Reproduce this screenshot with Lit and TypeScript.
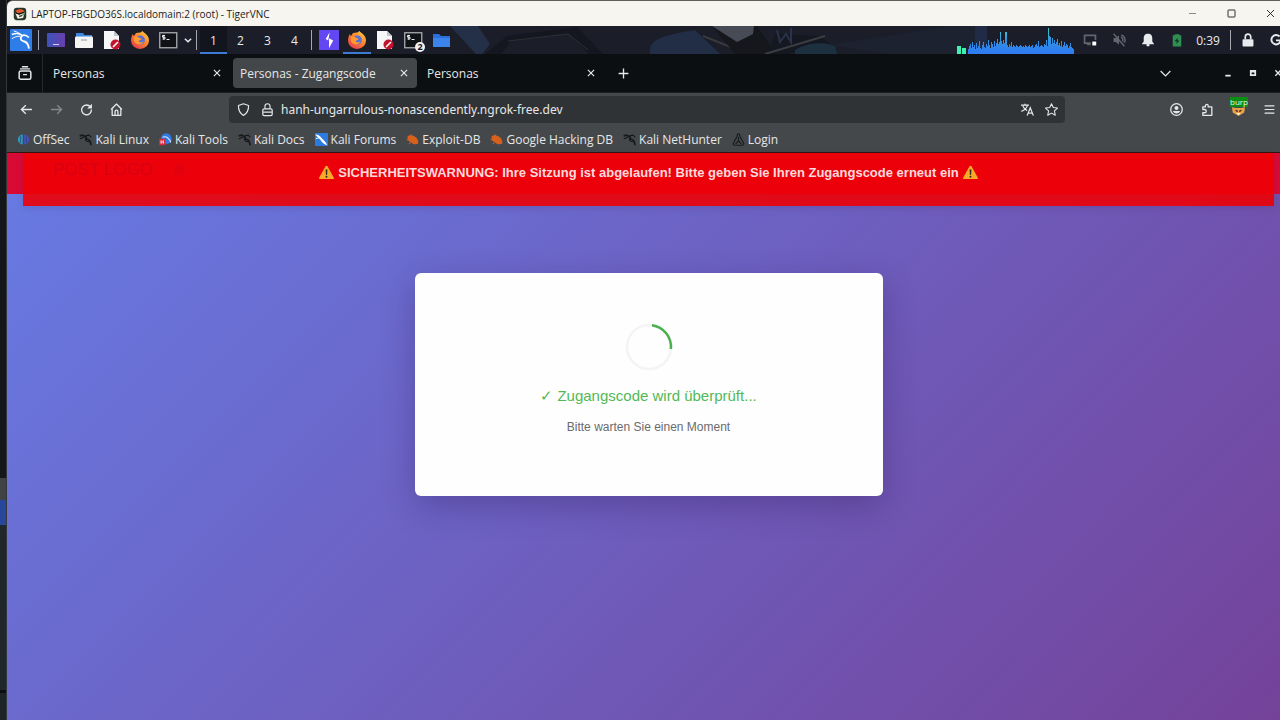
import { LitElement, html, css, svg, nothing } from "lit";
import { customElement, property } from "lit/decorators.js";

const dragon = svg`<path d="M1 4l4-1 3 1.500c2 .8 2.500 2 1.500 3.500 1.500 1 4.500.5 5.500 3 .8 1.500 1.500 3.500 1.500 6" fill="none" stroke="currentColor" stroke-width="2.400"/><path d="M1 8l6-2M9 8l1 3 4 1M9 4l5-1 3 3" fill="none" stroke="currentColor" stroke-width="1.500"/>`;

const firefox = svg`
  <defs><linearGradient id="ff" x1="1" y1="0" x2="0.2" y2="1">
    <stop offset="0" stop-color="#ffe14a"/><stop offset=".45" stop-color="#ff8a2c"/><stop offset="1" stop-color="#e83a52"/>
  </linearGradient></defs>
  <path d="M9 1.500c2-.2 1.500-1.500 2.500-1.500 1 2 6.500 3.500 6.500 9.500a9 8.500 0 0 1-18 0c0-3 1-4 1.500-6.500l1.500 2 2-3z" fill="url(#ff)"/>
  <circle cx="9.300" cy="9" r="4.600" fill="#5b6fd6"/>
  <path d="M3 6c3-1 4 0 5.500 1 1 .6 2 .5 2 1.300-1 1.200-2.500.8-2.800 2 1 1.800 3.600 1.200 5 0-1 4-8 4.500-9.700-.3z" fill="#ff9a2e"/>`;

const note = svg`
  <path d="M1 0h10l5 5v13H1z" fill="#f7f7f7"/><path d="M11 0v5h5z" fill="#c4c6ca"/>
  <circle cx="12.500" cy="13.500" r="5" fill="#c2142c"/><path d="M10 16l5-5" stroke="#fff" stroke-width="1.600"/>`;

const terminal = svg`
  <rect x=".75" y="1.750" width="17" height="15" fill="#101216" stroke="#a9acb0" stroke-width="1.300"/>
  <path d="M6 4.500H3.500V6.200H6V8H3.500M4.800 3.800v5M7.500 8.500h3" stroke="#eceff1" fill="none" stroke-width="1"/>`;

const ICONS: Record<string, unknown> = {
  tiger: svg`<rect x="1" y="1" width="16" height="16" rx="4" fill="#26352d"/><path d="M3 5c4-3 8-3 12 0l-3 2-6 1z" fill="#e8572a"/><path d="M3 8l5 2 7-3-2 7-7 1z" fill="#f3f0df"/><path d="M4 8l4 1 6-2M8 12l4-1" stroke="#111" stroke-width="1.500" fill="none"/><path d="M11 9l4-1-1 3z" fill="#3aa655"/>`,
  kali: svg`<rect width="18" height="18" rx="1" fill="#2f7de8"/><path d="M1.500 4.500c3-1 6-1.500 8.500 1" fill="none" stroke="#fff" stroke-width="1.200"/><path d="M1.500 8c2-1.500 4-2 7-2.200M3 1.500c3 1 5.500 2 7 4" fill="none" stroke="#fff" stroke-width=".8"/><path d="M10 5.500c-2 1.500-1.500 4 1 4.500 2.500.4 4 1.500 4.500 6" fill="none" stroke="#fff" stroke-width="1.500"/><path d="M9.500 5.500c2-1 4-.5 6 1.500" fill="none" stroke="#fff" stroke-width="1.300"/>`,
  desktop: svg`<defs><linearGradient id="dk"><stop stop-color="#3b54b9"/><stop offset="1" stop-color="#6a3fae"/></linearGradient></defs><rect y="2" width="18" height="14" rx="1" fill="url(#dk)"/><path d="M6 13.500h6" stroke="#cdd3ee" stroke-width="1"/>`,
  files: svg`<path d="M1 2h7l1.500 2H17v4H1z" fill="#3f86dd"/><rect y="5.500" width="18" height="11.500" rx="1" fill="#f4f4f2"/><path d="M6 9h6" stroke="#a9adb3" stroke-width="1.300"/>`,
  note, firefox, terminal,
  down: svg`<path d="M2 6l7 7 7-7" fill="none" stroke="currentColor" stroke-width="3.400"/>`,
  burp: svg`<rect width="18" height="18" fill="#6247f2"/><path d="M9.600 2L6 8l2.300 1.500zM8.700 16l-.3-4.500M9 7.500v9l3.800-7z" fill="#fff"/>`,
  folder: svg`<path d="M1 3h6l2 2h9v11H1z" fill="#2b6fd8"/><path d="M1 7h17v9H1z" fill="#3b84ec"/>`,
  screen: svg`<path d="M16 9V3H2v10h8" fill="none" stroke="currentColor" stroke-width="2.200"/><path d="M5 15h5" stroke="currentColor" stroke-width="1.500"/><rect x="12" y="11" width="5" height="5" fill="#fff"/>`,
  mute: svg`<path d="M2 6.500h3L9 3v12l-4-3.500H2z" fill="currentColor"/><path d="M2 1l14 16M11.500 5c2 1 3 3 2.500 6M12 2.500c5 1 5.500 7 4 10" stroke="currentColor" stroke-width="1.800" fill="none"/>`,
  bell: svg`<path d="M9 1c4.500 0 5.500 3 5.500 6v4l2.500 3.500H1L3.500 11V7c0-3 1-6 5.500-6z" fill="currentColor"/><rect x="7" y="14" width="4" height="3" rx="1" fill="currentColor"/>`,
  battery: svg`<path d="M3.500 3h2.500V1.500h6V3h2.500v14.500h-11z" fill="#2f8f52"/><path d="M10 6l-4 4.500h3l-1 3.500 4-4.500H9z" fill="#0b2114"/>`,
  lockSolid: svg`<rect x="2" y="8" width="14" height="9.500" rx="1" fill="currentColor"/><path d="M5.500 8V5a3.500 3.500 0 0 1 7 0v3" stroke="currentColor" fill="none" stroke-width="2.200"/>`,
  logout: svg`<path d="M13.500 4.500a6 6 0 1 0 1.500 5.500M9 9.500h7" stroke="currentColor" fill="none" stroke-width="2.500"/>`,
  min: svg`<path d="M2 9h14" stroke="currentColor" stroke-width="1"/>`,
  max: svg`<rect x="2" y="2" width="14" height="14" rx="1" fill="none" stroke="currentColor" stroke-width="1.800"/>`,
  close: svg`<path d="M2 2l14 14M16 2L2 16" stroke="currentColor" stroke-width="1.800"/>`,
  minBold: svg`<path d="M3 15h12" stroke="currentColor" stroke-width="4"/>`,
  maxBold: svg`<path d="M2 2h14v14H2zM6 8v4h6V8z" fill="currentColor" fill-rule="evenodd"/>`,
  closeBold: svg`<path d="M3 3l12 12M15 3L3 15" stroke="currentColor" stroke-width="3"/>`,
  tabClose: svg`<path d="M2 2l14 14M16 2L2 16" stroke="currentColor" stroke-width="2.600"/>`,
  archive: svg`<rect x="1.500" y="6.500" width="15" height="10.500" rx="2" fill="none" stroke="currentColor" stroke-width="1.900"/><path d="M2.500 3.800h13M5 1h8M6.500 11h5" stroke="currentColor" stroke-width="1.700"/>`,
  plus: svg`<path d="M9 1v16M1 9h16" stroke="currentColor" stroke-width="2.200"/>`,
  chevron: svg`<path d="M1 5l8 8 8-8" fill="none" stroke="currentColor" stroke-width="2"/>`,
  back: svg`<path d="M16.500 9H2.500M8 3L2 9l6 6" fill="none" stroke="currentColor" stroke-width="1.900"/>`,
  forward: svg`<path d="M1.500 9h14M10 3l6 6-6 6" fill="none" stroke="currentColor" stroke-width="1.900"/>`,
  reload: svg`<path d="M14.500 5.500A6.800 6.800 0 1 0 15.800 9" fill="none" stroke="currentColor" stroke-width="1.900"/><path d="M16.500 1v6.500H10z" fill="currentColor"/>`,
  home: svg`<path d="M1.500 9l7.500-7.500L16.500 9M3 8v9h12V8M7 17v-5a2 2 0 0 1 4 0v5" fill="none" stroke="currentColor" stroke-width="1.800" stroke-linejoin="round"/>`,
  shield: svg`<path d="M9 1l7 2.500C16.300 10 13.500 14.500 9 17.300 4.500 14.500 1.700 10 2 3.500z" fill="none" stroke="currentColor" stroke-width="1.600" stroke-linejoin="round"/>`,
  lock: svg`<rect x="2.500" y="8" width="13" height="9.500" rx="2" fill="none" stroke="currentColor" stroke-width="1.700"/><path d="M5.500 8V4.500a3.500 3.500 0 0 1 7 0V8M3 12.700h12" stroke="currentColor" fill="none" stroke-width="1.600"/>`,
  translate: svg`<path d="M0 3h11M5.500 1v2M9 3c-1 4-4 7-8.500 8.500M2.500 4c1 3 3 5 6 6.500M8.500 17.500l4.300-11 4.300 11M10 14h5.500" fill="none" stroke="currentColor" stroke-width="1.700"/>`,
  star: svg`<path d="M9 1l2.500 5.300 5.800.7-4.300 4 1.200 5.900L9 14l-5.200 2.900L5 11 .7 7l5.800-.7z" fill="none" stroke="currentColor" stroke-width="1.500" stroke-linejoin="round"/>`,
  account: svg`<circle cx="9" cy="9" r="8" fill="none" stroke="currentColor" stroke-width="1.800"/><circle cx="9" cy="6.800" r="2.800" fill="currentColor"/><path d="M4 11h10c-.5 2.200-2.700 3.500-5 3.500S4.500 13.200 4 11z" fill="currentColor"/>`,
  puzzle: svg`<path d="M2.500 9V5.500H6V4a2 2 0 0 1 4 0v1.500h5V17H2.500v-3.500H5a1.800 1.800 0 0 0 0-4.500z" fill="none" stroke="currentColor" stroke-width="1.800" stroke-linejoin="round"/>`,
  menu: svg`<path d="M1 3h16M1 9h16M1 15h16" stroke="currentColor" stroke-width="1.900"/>`,
  fox: svg`<path d="M0 6l5 1h8l5-1-1 7-8 5-8-5z" fill="#e8a04a"/><path d="M5 10l3 2M13 10l-3 2" stroke="#5b2f10" stroke-width="2"/><path d="M6 14h6l-3 3z" fill="#fff3dd"/>`,
  offsec: svg`<path d="M8 2v14C-1 15-1 3 8 2z" fill="#2a9dbd"/><path d="M10 2v14c9-1 9-13 0-14z" fill="#4a50c8"/><path d="M5 4v10M13 4v10" stroke="#1f3f77" stroke-width="1"/>`,
  dragon,
  tools: svg`<circle cx="10" cy="8" r="7.500" fill="#2f7ae5"/><path d="M5 6c4-2 7 0 8 2 2 1 3 2 3 5" stroke="#dfeaff" stroke-width="1.600" fill="none"/><rect y="8" width="9" height="9" rx="1" fill="#d8283c"/><path d="M3 10v5M6 10v5M2 12.500h5" stroke="#fff" stroke-width="1"/>`,
  forums: svg`<rect width="18" height="18" fill="#2b7be0"/><path d="M0 2c5 0 8 3 10 6 2 1 5 5 7 9-4-1-8-4-9-7C6 8 3 5 0 2z" fill="#fff"/><path d="M1 8l6-2" stroke="#fff" stroke-width="1.200"/>`,
  exploit: svg`<path d="M2 5c3-3 7-2 10 0 4 2 5 5 5 10-4 1-7 1-9-1-4-1-6-5-6-9z" fill="#d8601c"/><path d="M1 9l3 1M7 2l1 2M6 14l-2 1" stroke="#d8601c" stroke-width="1.500"/>`,
  login: svg`<path d="M9 1c2 0 2 3 2 4l5 9c1 2 0 3-2 3H4c-2 0-3-1-2-3l5-9c0-1 0-4 2-4zM9 6v5l-4 4M9 11l4 4" stroke="currentColor" stroke-width="1.500" fill="none"/>`,
  warning: svg`<path d="M9 1c.7 0 1 .4 1.300.9l7.400 13c.6 1.100 0 2-1.200 2h-15c-1.200 0-1.800-.9-1.200-2l7.400-13C8 1.400 8.300 1 9 1z" fill="#f7a928"/><path d="M7.900 5.500h2.200l-.4 6.500H8.300z" fill="#3b2b1c"/><circle cx="9" cy="14.200" r="1.200" fill="#3b2b1c"/>`,
};

@customElement("ui-icon")
export class UiIcon extends LitElement {
  @property() name = "";
  static styles = css`
    :host { display: inline-block; flex: none; width: 14px; height: 14px; }
    .glyph { display: block; width: 100%; height: 100%; overflow: visible; }
  `;
  render() {
    return html`<svg class="glyph" viewBox="0 0 18 18" aria-hidden="true">${ICONS[this.name] ?? nothing}</svg>`;
  }
}

const reset = css`
  :host { display: block; box-sizing: border-box; }
  *, *::before { box-sizing: border-box; }
  button { appearance: none; border: 0; margin: 0; padding: 0; background: none; color: inherit; font: inherit; display: flex; align-items: center; justify-content: center; flex: none; }
`;

@customElement("desktop-panel")
export class DesktopPanel extends LitElement {
  static styles = [reset, css`
    :host { position: relative; background: #1b1e29; color: #e8eaed; height: 28px; font-size: 12px; overflow: hidden; }
    .wallpaper { position: absolute; inset: 0; width: 100%; height: 100%; }
    .bar { position: relative; display: flex; align-items: stretch; height: 100%; }
    .cell { width: 28px; position: relative; }
    .cell ui-icon { width: 18px; height: 18px; }
    .cell.kali ui-icon { width: 22px; height: 22px; }
    .cell.burp ui-icon { width: 20px; height: 20px; }
    .cell.tray { width: 29px; }
    .cell.tray ui-icon, .cell.session ui-icon { width: 14px; height: 14px; }
    .cell.dim { color: #62656c; }
    .more { width: 11px; }
    .more ui-icon { width: 8px; height: 8px; }
    .sep { width: 7px; flex: none; display: flex; justify-content: center; align-items: center; }
    .sep::before { content: ""; width: 1px; height: 20px; background: #a5a8ae; }
    .space { width: 27px; }
    .active { background: #12151e; box-shadow: inset 0 -2px #3c7ad6; }
    .current { box-shadow: inset 0 -2px #3c7ad6; }
    .count { position: absolute; right: 2px; bottom: 2px; width: 10px; height: 10px; border-radius: 50%; background: #f2f2f2; color: #15171c; font-size: 9px; line-height: 10px; font-weight: 700; text-align: center; }
    .grow { flex: 1; }
    .load { width: 118px; height: 28px; flex: none; }
    .clock { width: 34px; margin-right: 2px; display: flex; align-items: center; justify-content: center; flex: none; }
  `];

  private levels = [5,8,10,6,12,7,9,5,11,6,8,13,6,5,9,12,7,6,10,8,14,9,6,12,10,7,13,8,11,15,10,12,22,13,10,14,11,22,22,9,7,10,8,12,7,9,8,7,9,8,7,8,9,8,7,8,7,9,8,7,8,9,7,8,9,6,7,9,10,8,13,7,8,9,8,7,10,9,14,8,26,18,17,10,16,11,14,10,12,15,9,11,8,13,7,9,12,8,10,9,6,8,11,7,6,5];

  render() {
    return html`
      <svg class="wallpaper" viewBox="7 26 1283 28" preserveAspectRatio="none" aria-hidden="true">
        <path d="M450 26h28l12 18-8 10h-6z" fill="#243048"/><path d="M485 54l22-18 70-9 26 27h-14l-20-20-58 7-10 13z" fill="#14171f"/>
        <path d="M508 41l60-7 20 16" stroke="#2e3038" fill="none"/>
        <path d="M650 50c0-12 20-16 45-20l25 24h-70z" fill="#222e45"/><path d="M703 36l45 18" stroke="#39393c" stroke-width="2"/>
        <path d="M712 26h45l20 28h-42z" fill="#15171d"/><path d="M712 26h42l-1 8-16 8z" fill="#464b55"/>
        <path d="M775 34l45 2 10 8-42 10h-20z" fill="#151820"/><path d="M765 54l60-18" stroke="#3c3d42" stroke-width="2"/>
        <path d="M777 30l3 12 6-8 5 8v-14" stroke="#2a334b" stroke-width="2" fill="none"/><path d="M795 50c14-8 30-8 40-4l2 8h-42z" fill="#1c3040"/>
        <path d="M830 45l120-19h30v28h-90z" fill="#1c2230"/><path d="M975 26h12v28h-12z" fill="#222b45"/>
      </svg>
      <div class="bar">
        <button class="cell kali" aria-label="Applications"><ui-icon name="kali"></ui-icon></button>
        <span class="sep"></span>
        ${["desktop", "files", "note", "firefox", "terminal"].map(n => html`<button class="cell" aria-label=${n}><ui-icon name=${n}></ui-icon></button>`)}
        <button class="more" aria-label="More"><ui-icon name="down"></ui-icon></button>
        <span class="sep"></span>
        ${[1, 2, 3, 4].map(n => html`<button class="space ${n === 1 ? "active" : ""}">${n}</button>`)}
        <span class="sep"></span>
        <button class="cell burp" aria-label="Burp"><ui-icon name="burp"></ui-icon></button>
        <button class="cell current" aria-label="Firefox"><ui-icon name="firefox"></ui-icon></button>
        <button class="cell" aria-label="Editor"><ui-icon name="note"></ui-icon></button>
        <button class="cell" aria-label="Terminals"><ui-icon name="terminal"></ui-icon><span class="count">2</span></button>
        <button class="cell" aria-label="Folder"><ui-icon name="folder"></ui-icon></button>
        <span class="grow"></span>
        <svg class="load" viewBox="0 0 118 28" aria-hidden="true">
          <defs><linearGradient id="ld" gradientUnits="userSpaceOnUse" x1="0" x2="0" y1="28" y2="0"><stop offset=".1" stop-color="#2f7df0"/><stop offset=".5" stop-color="#3195e0"/><stop offset="1" stop-color="#43d5c8"/></linearGradient></defs>
          <rect x="0" y="20" width="4" height="8" fill="#3ff0b0"/><rect x="5" y="22" width="4" height="6" fill="#3ff0b0"/>
          ${this.levels.map((v, i) => svg`<rect x=${11 + i} y=${28 - v} width="1" height=${v} fill="url(#ld)"/>`)}
        </svg>
        <button class="cell tray dim" aria-label="Display"><ui-icon name="screen"></ui-icon></button>
        <button class="cell tray dim" aria-label="Muted"><ui-icon name="mute"></ui-icon></button>
        <button class="cell tray" aria-label="Notifications"><ui-icon name="bell"></ui-icon></button>
        <button class="cell tray" aria-label="Battery"><ui-icon name="battery"></ui-icon></button>
        <time class="clock">0:39</time>
        <span class="sep"></span>
        <button class="cell session" aria-label="Lock"><ui-icon name="lockSolid"></ui-icon></button>
        <button class="cell session" aria-label="Log out"><ui-icon name="logout"></ui-icon></button>
      </div>`;
  }
}

@customElement("browser-chrome")
export class BrowserChrome extends LitElement {
  static styles = [reset, css`
    :host { color: #e6e7e8; font-size: 12px; background: #45484b; }
    .tabs { display: flex; align-items: center; height: 39px; background: #0c0f12; border-bottom: 1px solid #1c1f22; }
    .overview { width: 36px; height: 100%; border-right: 1px solid #25282c; }
    .strip { display: flex; gap: 3px; padding-left: 3px; }
    .tab { display: flex; align-items: center; width: 184px; height: 30px; padding: 0 5px 0 7px; border-radius: 4px; }
    .tab.on { background: #44474a; }
    .title { flex: 1; height: 100%; justify-content: flex-start; white-space: nowrap; }
    .x { width: 16px; height: 16px; }
    .x ui-icon { width: 8px; height: 8px; }
    .plus { width: 30px; margin-left: 4px; }
    .plus ui-icon, .list ui-icon { width: 11px; height: 11px; }
    .grow { flex: 1; }
    .list { width: 30px; margin-right: 35px; }
    .win { width: 25px; }
    .win ui-icon { width: 8px; height: 8px; }
    .nav { display: flex; align-items: center; height: 33px; padding: 0 5px 0 4px; }
    .tool { width: 30px; height: 26px; position: relative; }
    .tool.off { color: #85888b; }
    .side { width: 31px; height: 26px; position: relative; }
    .tool ui-icon, .side ui-icon { width: 13px; height: 13px; }
    .side.menu ui-icon { width: 11px; height: 11px; }
    .tag { position: absolute; left: 7px; top: 0; height: 10px; background: #0a8f12; color: #e9f5e5; font-size: 8px; line-height: 10px; }
    .url { flex: 1; min-width: 0; display: flex; align-items: center; height: 27px; margin: 0 96px 0 98px; padding: 0 2px; border-radius: 4px; background: #303336; }
    .url .in { width: 24px; height: 24px; }
    .url ui-icon { width: 13px; height: 13px; }
    .address { flex: 1; min-width: 0; height: 24px; border: 0; padding: 0 2px; background: none; color: inherit; font-family: "Noto Sans", sans-serif; font-size: 12px; outline: 0; }
    .marks { display: flex; align-items: center; gap: 10px; height: 27px; padding: 0 10px; border-bottom: 1px solid #34140f; }
    .mark { display: flex; align-items: center; gap: 3px; color: inherit; text-decoration: none; white-space: nowrap; }
    .mark ui-icon { width: 13px; height: 13px; }
    .ink { color: #16181a; }
  `];

  private marks = [["offsec", "OffSec"], ["dragon", "Kali Linux"], ["tools", "Kali Tools"], ["dragon", "Kali Docs"], ["forums", "Kali Forums"], ["exploit", "Exploit-DB"], ["exploit", "Google Hacking DB"], ["dragon", "Kali NetHunter"], ["login", "Login"]];

  render() {
    return html`
      <div class="tabs">
        <button class="overview" aria-label="All tabs"><ui-icon name="archive"></ui-icon></button>
        <div class="strip">
          ${["Personas", "Personas - Zugangscode", "Personas"].map((t, i) => html`
            <div class="tab ${i === 1 ? "on" : ""}"><button class="title">${t}</button><button class="x" aria-label="Close tab"><ui-icon name="tabClose"></ui-icon></button></div>`)}
        </div>
        <button class="plus" aria-label="New tab"><ui-icon name="plus"></ui-icon></button>
        <span class="grow"></span>
        <button class="list" aria-label="List tabs"><ui-icon name="chevron"></ui-icon></button>
        ${["minBold", "maxBold", "closeBold"].map(n => html`<button class="win" aria-label=${n}><ui-icon name=${n}></ui-icon></button>`)}
      </div>
      <div class="nav">
        ${["back", "forward", "reload", "home"].map(n => html`<button class="tool ${n === "forward" ? "off" : ""}" aria-label=${n}><ui-icon name=${n}></ui-icon></button>`)}
        <div class="url">
          <button class="in" aria-label="Protection"><ui-icon name="shield"></ui-icon></button>
          <button class="in" aria-label="Connection"><ui-icon name="lock"></ui-icon></button>
          <input class="address" aria-label="Address" value="hanh-ungarrulous-nonascendently.ngrok-free.dev" spellcheck="false">
          <button class="in" aria-label="Translate"><ui-icon name="translate"></ui-icon></button>
          <button class="in" aria-label="Bookmark"><ui-icon name="star"></ui-icon></button>
        </div>
        <button class="side" aria-label="Account"><ui-icon name="account"></ui-icon></button>
        <button class="side" aria-label="Extensions"><ui-icon name="puzzle"></ui-icon></button>
        <button class="side" aria-label="Proxy"><ui-icon name="fox"></ui-icon><span class="tag">burp</span></button>
        <button class="side menu" aria-label="Menu"><ui-icon name="menu"></ui-icon></button>
      </div>
      <nav class="marks">
        ${this.marks.map(([icon, label]) => html`<a class="mark" href="#"><ui-icon class=${icon === "dragon" || icon === "login" ? "ink" : ""} name=${icon}></ui-icon>${label}</a>`)}
      </nav>`;
  }
}

@customElement("site-page")
export class SitePage extends LitElement {
  static styles = [reset, css`
    :host { position: relative; display: flex; flex-direction: column; font-family: "Liberation Sans", Arial, sans-serif; background: linear-gradient(135deg, #677be4 0%, #744299 100%); }
    .head { height: 41px; flex: none; display: flex; align-items: flex-start; gap: 20px; padding: 7px 46px; background: #d90b35; color: #0a0078; font-size: 17px; line-height: 20px; }
    .dot { width: 12px; height: 12px; margin-top: 4px; border-radius: 50%; background: #900e60; }
    .alert { position: absolute; top: 0; left: 16px; right: 16px; height: 53px; display: flex; justify-content: center; align-items: flex-start; gap: 4px; padding-top: 12px; background: rgba(237, 0, 6, 0.9); box-shadow: 0 2px 8px rgba(60, 0, 60, 0.12); color: #ffd9dc; font-size: 13px; line-height: 16px; font-weight: 700; white-space: nowrap; }
    .alert ui-icon { width: 15px; height: 15px; }
    .main { flex: 1; display: flex; flex-direction: column; align-items: center; padding: 79px 20px; }
    .card { width: 100%; max-width: 468px; padding: 50px 40px 61px; border-radius: 6px; background: #fefefe; box-shadow: 0 10px 32px rgba(40, 20, 80, 0.3); display: flex; flex-direction: column; align-items: center; text-align: center; }
    .spinner { width: 48px; height: 48px; display: block; }
    .status { margin: 14px 0 0; color: #52b955; font-size: 15px; line-height: 22px; font-weight: 400; }
    .hint { margin: 12px 0 0; color: #6b6b6b; font-size: 12px; line-height: 16px; }
  `];
  render() {
    return html`
      <header class="head">POST LOGO<span class="dot"></span></header>
      <div class="alert" role="alert">
        <ui-icon name="warning"></ui-icon>
        <span>SICHERHEITSWARNUNG: Ihre Sitzung ist abgelaufen! Bitte geben Sie Ihren Zugangscode erneut ein</span>
        <ui-icon name="warning"></ui-icon>
      </div>
      <main class="main">
        <section class="card">
          <svg class="spinner" viewBox="0 0 48 48" aria-hidden="true">
            <circle cx="24" cy="24" r="22" fill="none" stroke="#f4f4f4" stroke-width="2.500"/>
            <path d="M27 2.200A22 22 0 0 1 45.900 26" fill="none" stroke="#4caf50" stroke-width="2.500"/>
          </svg>
          <h1 class="status">✓ Zugangscode wird überprüft...</h1>
          <p class="hint">Bitte warten Sie einen Moment</p>
        </section>
      </main>`;
  }
}

@customElement("app-root")
export class AppRoot extends LitElement {
  static styles = [reset, css`
    :host { display: grid; grid-template-columns: 7px minmax(0, 1fr); min-height: 100vh; overflow: hidden; background: #111316; font-family: "Open Sans", "Noto Sans", sans-serif; }
    .behind { background: linear-gradient(#15161a 0 478px, #404246 478px 500px, #27479a 500px 525px, #1f272b 525px 690px, #0b0d0f 690px 693px, #1d2428 693px); border-right: 1px solid #33363a; }
    .window { width: calc(100% + 10px); display: flex; flex-direction: column; }
    .title { display: flex; align-items: center; height: 26px; padding-left: 6px; border-top: 1px solid #605f5c; border-top-left-radius: 6px; background: #f6f5ef; color: #1c1c1c; font-size: 10px; }
    .name { flex: 1; margin-left: 4px; white-space: nowrap; }
    .win { width: 39px; height: 100%; }
    .win ui-icon { width: 9px; height: 9px; }
    .page { flex: 1; }
  `];
  render() {
    return html`
      <div class="behind"></div>
      <div class="window">
        <header class="title">
          <ui-icon name="tiger"></ui-icon>
          <span class="name">LAPTOP-FBGDO36S.localdomain:2 (root) - TigerVNC</span>
          ${["min", "max", "close"].map(n => html`<button class="win" aria-label=${n}><ui-icon name=${n}></ui-icon></button>`)}
        </header>
        <desktop-panel></desktop-panel>
        <browser-chrome></browser-chrome>
        <site-page class="page"></site-page>
      </div>`;
  }
}
